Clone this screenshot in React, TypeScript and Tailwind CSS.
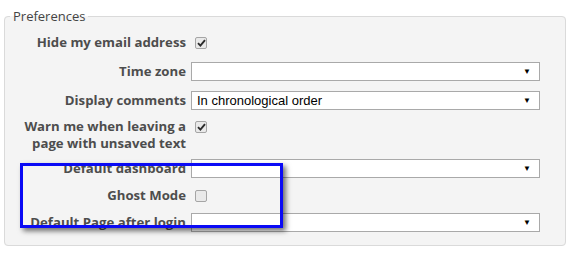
import React from 'react'

const labelCls =
  "w-[181px] shrink-0 text-right font-bold text-[13.2px] leading-[17px] text-[#4d4d4d]"

function Check({ checked }: { checked?: boolean }) {
  return (
    <span className="ml-[4px] flex h-[12px] w-[12px] items-center justify-center rounded-[2px] border border-[#a5a5a5] bg-[#e9e9e9]">
      {checked && (
        <svg width="9" height="8" viewBox="0 0 9 8">
          <path d="M1 4.2 L3.4 6.6 L8 1.2" fill="none" stroke="#2b2b2b" strokeWidth="1.9" />
        </svg>
      )}
    </span>
  )
}

function Select({ value }: { value?: string }) {
  return (
    <div className="flex h-[19px] w-[349px] items-center justify-between border border-[#a9a9a9] bg-white pl-[5px] pr-[8px] font-['Liberation_Sans',Arial,sans-serif] text-[13px] text-black">
      <span>{value ?? ''}</span>
      <span className="text-[8px] leading-none">▼</span>
    </div>
  )
}

export default function App() {
  return (
    <div className="relative h-[253px] w-[568px] overflow-hidden bg-white pt-[7px] font-['Open_Sans',sans-serif]">
      <fieldset className="ml-[4px] h-[239px] w-[562px] rounded-[4px] border border-[#dadada] bg-[#f4f4f4]">
        <legend className="ml-[5px] px-[3px] text-[13px] leading-[18px] text-[#444]">Preferences</legend>

        <div className="flex flex-col pt-[3px]">
          <div className="flex h-[29px] items-center gap-[5px]">
            <div className={labelCls}>Hide my email address</div>
            <Check checked />
          </div>
          <div className="flex h-[29px] items-center gap-[5px]">
            <div className={labelCls}>Time zone</div>
            <Select />
          </div>
          <div className="flex h-[29px] items-center gap-[5px]">
            <div className={labelCls}>Display comments</div>
            <Select value="In chronological order" />
          </div>
          <div className="flex h-[40px] items-start gap-[5px] pt-[3px]">
            <div className={labelCls}>Warn me when leaving a page with unsaved text</div>
            <div className="pt-[3px]">
              <Check checked />
            </div>
          </div>
          <div className="flex h-[27px] items-center gap-[5px]">
            <div className={labelCls}>Default dashboard</div>
            <Select />
          </div>
          <div className="flex h-[27px] items-center gap-[5px]">
            <div className={labelCls}>Ghost Mode</div>
            <Check />
          </div>
          <div className="flex h-[27px] items-center gap-[5px]">
            <div className={labelCls}>Default Page after login</div>
            <Select />
          </div>
        </div>
      </fieldset>

      <div className="absolute left-[20px] top-[163px] h-[65px] w-[263px] border-[3px] border-[#0a0af5] shadow-[3px_3px_5px_rgba(0,0,0,0.55)]" />
    </div>
  )
}
